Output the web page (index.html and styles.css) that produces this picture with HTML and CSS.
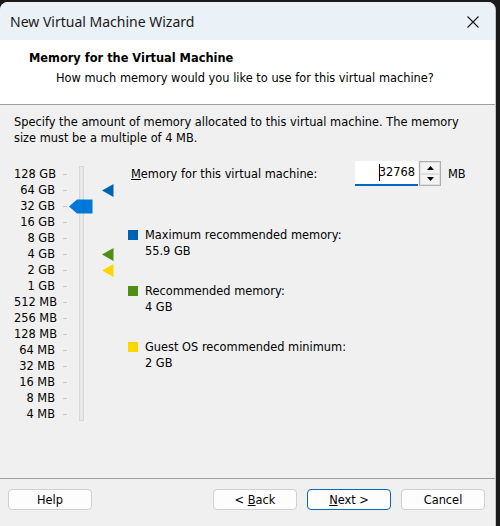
FILE: index.html
```html
<!DOCTYPE html>
<html lang="en">
<head>
<meta charset="utf-8">
<title>New Virtual Machine Wizard</title>
<link rel="stylesheet" href="styles.css">
</head>
<body>
<div class="window">
  <div class="titlebar">
    <span class="title">New Virtual Machine Wizard</span>
    <svg class="close" width="12" height="12" viewBox="0 0 12 12"><path d="M0.5 0.5L11.5 11.5M11.5 0.5L0.5 11.5" stroke="#1a1a1a" stroke-width="1.1" fill="none"/></svg>
  </div>
  <div class="header">
    <div class="h-title">Memory for the Virtual Machine</div>
    <div class="h-sub">How much memory would you like to use for this virtual machine?</div>
  </div>
  <div class="content">
    <p class="intro">Specify the amount of memory allocated to this virtual machine. The memory size must be a multiple of 4 MB.</p>
    <div class="main">
      <div class="slider">
        <ul class="scale">
          <li>128 GB</li><li>64 GB</li><li>32 GB</li><li>16 GB</li><li>8 GB</li><li>4 GB</li><li>2 GB</li><li>1 GB</li>
          <li>512 MB</li><li>256 MB</li><li>128 MB</li><li>64 MB</li><li>32 MB</li><li>16 MB</li><li>8 MB</li><li>4 MB</li>
        </ul>
        <div class="track"></div>
        <svg class="thumb" style="top:33px" width="24" height="15" viewBox="0 0 24 15"><path d="M0 7.5L8 0.5H23.5V14.5H8Z" fill="#0078d7"/></svg>
        <svg class="marker" style="top:18px" width="12" height="13" viewBox="0 0 12 13"><path d="M0 6.5L11.5 0V13Z" fill="#0063b1"/></svg>
        <svg class="marker" style="top:82px" width="12" height="13" viewBox="0 0 12 13"><path d="M0 6.5L11.5 0V13Z" fill="#4d8f14"/></svg>
        <svg class="marker" style="top:98px" width="12" height="13" viewBox="0 0 12 13"><path d="M0 6.5L11.5 0V13Z" fill="#fdd600"/></svg>
      </div>
      <div class="details">
        <div class="mem-row">
          <label class="mem-label"><u>M</u>emory for this virtual machine:</label>
          <div class="field"><span class="caret"></span>32768</div>
          <div class="spin">
            <span class="spin-btn"><svg width="7" height="4" viewBox="0 0 7 4"><path d="M3.5 0L7 4H0Z" fill="#000"/></svg></span>
            <span class="spin-btn"><svg width="7" height="4" viewBox="0 0 7 4"><path d="M0 0H7L3.5 4Z" fill="#000"/></svg></span>
          </div>
          <span class="unit">MB</span>
        </div>
        <div class="legend">
          <div class="item"><span class="swatch blue"></span><div><div>Maximum recommended memory:</div><div>55.9 GB</div></div></div>
          <div class="item"><span class="swatch green"></span><div><div>Recommended memory:</div><div>4 GB</div></div></div>
          <div class="item"><span class="swatch yellow"></span><div><div>Guest OS recommended minimum:</div><div>2 GB</div></div></div>
        </div>
      </div>
    </div>
  </div>
  <div class="footer">
    <button class="btn">Help</button>
    <span class="spacer"></span>
    <button class="btn">&lt; <u>B</u>ack</button>
    <button class="btn primary"><u>N</u>ext &gt;</button>
    <button class="btn">Cancel</button>
  </div>
</div>
</body>
</html>
```
FILE: styles.css
```css
html, body {
  margin: 0;
  padding: 0;
}
body {
  background: #1b1b1b;
  width: 500px;
  height: 526px;
  overflow: hidden;
  font-family: "DejaVu Sans", Verdana, sans-serif;
  font-size: 11.4px;
  color: #000;
}
.window {
  margin-top: 2px;
  width: 495px;
  height: 524px;
  background: #f0f0f0;
  border-right: 1px solid #c4c4c4;
  border-radius: 8px 8px 0 0;
  overflow: hidden;
  display: flex;
  flex-direction: column;
}
.titlebar {
  height: 38px;
  flex: none;
  background: #eaf1f7;
  display: flex;
  align-items: center;
  padding: 0 16px 0 10px;
}
.title {
  flex: 1;
  font-family: "Noto Sans", "Open Sans", sans-serif;
  font-size: 14px;
  color: #1a1a1a;
}
.close {
  display: block;
  margin-top: 2px;
}
.header {
  flex: none;
  background: #fff;
  border-bottom: 1px solid #a0a0a0;
  box-sizing: border-box;
  height: 65px;
  padding: 10px 0 0 29px;
}
.h-title {
  font-weight: bold;
  line-height: 16px;
  color: #000;
}
.h-sub {
  margin-top: 4px;
  margin-left: 27px;
  line-height: 16px;
}
.content {
  flex: 1;
  padding: 9px 0 0 14px;
}
.intro {
  margin: 0;
  width: 452px;
  line-height: 16px;
}
.main {
  display: flex;
  margin-top: 20px;
}
.slider {
  position: relative;
  width: 114px;
  flex: none;
  height: 255px;
}
.scale {
  list-style: none;
  margin: 0;
  padding: 0;
  width: 41px;
  text-align: right;
}
.scale li {
  height: 16px;
  line-height: 16px;
  position: relative;
  white-space: nowrap;
}
.scale li::after {
  content: "";
  position: absolute;
  left: 49px;
  top: 8px;
  width: 4px;
  height: 1px;
  background: #c6c6c6;
}
.track {
  position: absolute;
  left: 65px;
  top: 0;
  width: 3px;
  height: 253px;
  background: #e6e9e6;
  border: 1px solid #d7d9d7;
}
.thumb {
  position: absolute;
  left: 55px;
  display: block;
}
.marker {
  position: absolute;
  left: 88px;
  display: block;
}
.details {
  flex: 1;
  margin-top: -5px;
}
.mem-row {
  display: flex;
  align-items: center;
  height: 25px;
}
.mem-label {
  margin-left: 3px;
  width: 224px;
}
.field {
  position: relative;
  width: 60px;
  height: 23px;
  line-height: 23px;
  background: #fff;
  border-bottom: 2px solid #0067c0;
  text-align: right;
  padding-right: 3px;
}
.caret {
  position: absolute;
  left: 24px;
  top: 3px;
  width: 1px;
  height: 17px;
  background: #000;
}
.spin {
  width: 20px;
  height: 23px;
  border: 1px solid #adadad;
  display: flex;
  flex-direction: column;
  background: #fff;
  margin-left: 1px;
}
.spin-btn {
  flex: 1;
  display: flex;
  align-items: center;
  justify-content: center;
  background: #f3f3f3;
  border: 1px solid #e0e0e0;
}
.spin-btn svg {
  display: block;
}
.unit {
  margin-left: 7px;
}
.legend {
  margin-top: 41px;
  display: flex;
  flex-direction: column;
  gap: 24px;
}
.item {
  display: flex;
  gap: 7px;
  line-height: 16px;
}
.swatch {
  width: 10px;
  height: 10px;
  margin-top: 3px;
  flex: none;
}
.blue { background: #0063b1; }
.green { background: #4d8f14; }
.yellow { background: #fdd600; }
.footer {
  flex: none;
  height: 37px;
  border-top: 1px solid #a0a0a0;
  display: flex;
  align-items: flex-start;
  padding: 10px 10px 0 8px;
  gap: 10px;
}
.spacer {
  flex: 1;
}
.btn {
  width: 84px;
  height: 21px;
  background: #fdfdfd;
  border: 1px solid #d0d0d0;
  border-radius: 4px;
  font-family: "DejaVu Sans", Verdana, sans-serif;
  font-size: 11.4px;
  color: #000;
  padding: 0;
}
.btn.primary {
  border-color: #0067c0;
}
```
